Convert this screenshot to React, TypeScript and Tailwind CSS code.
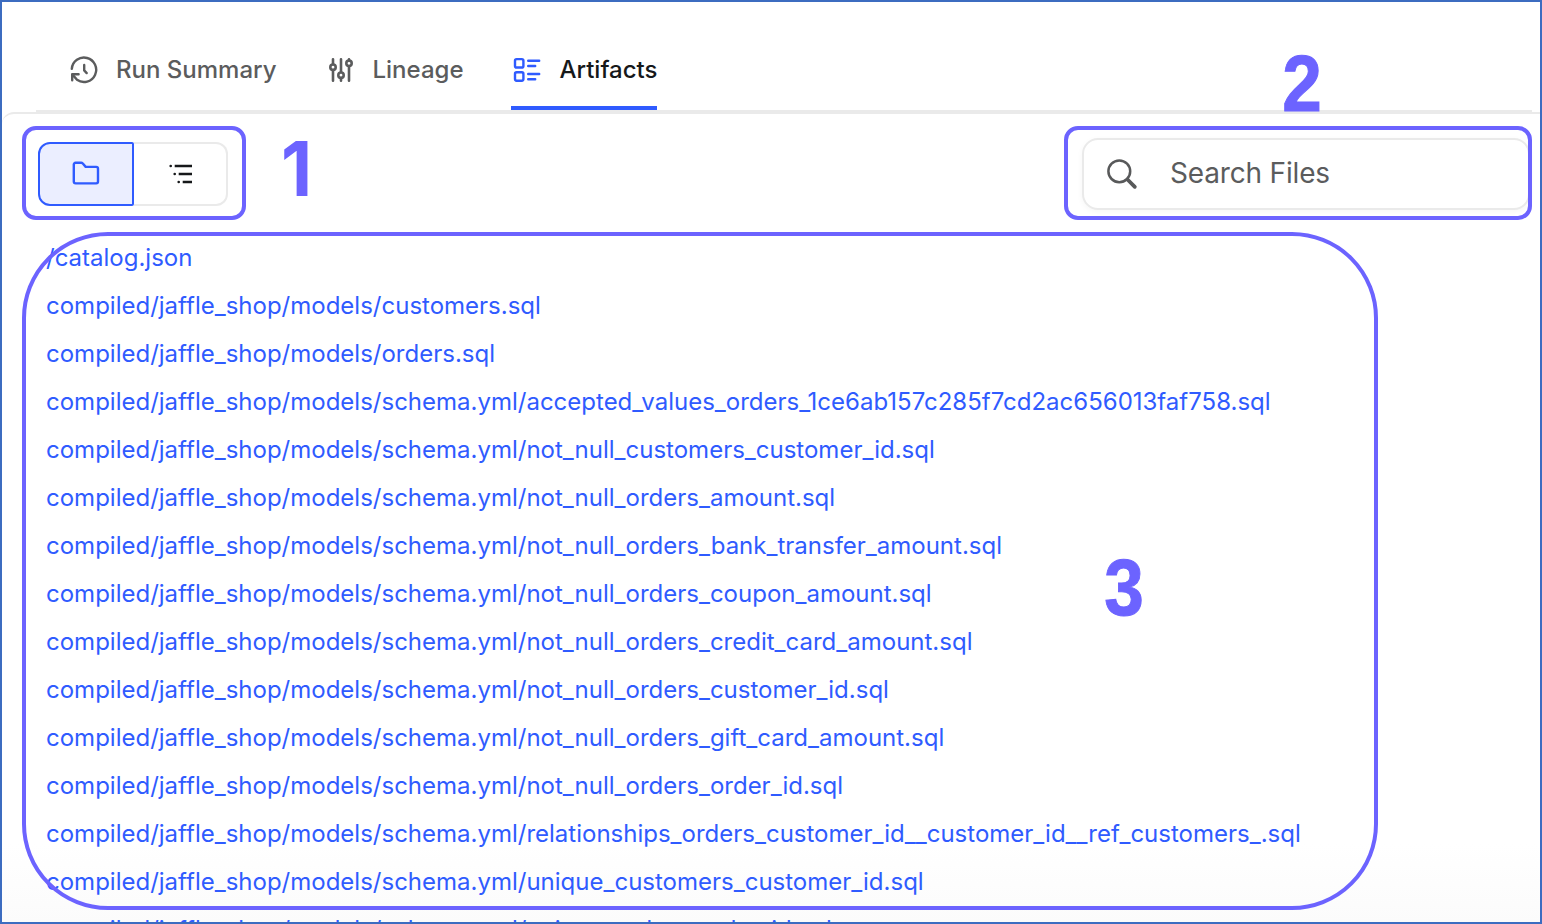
import type { ReactNode } from "react";

const files = [
  "/catalog.json",
  "compiled/jaffle_shop/models/customers.sql",
  "compiled/jaffle_shop/models/orders.sql",
  "compiled/jaffle_shop/models/schema.yml/accepted_values_orders_1ce6ab157c285f7cd2ac656013faf758.sql",
  "compiled/jaffle_shop/models/schema.yml/not_null_customers_customer_id.sql",
  "compiled/jaffle_shop/models/schema.yml/not_null_orders_amount.sql",
  "compiled/jaffle_shop/models/schema.yml/not_null_orders_bank_transfer_amount.sql",
  "compiled/jaffle_shop/models/schema.yml/not_null_orders_coupon_amount.sql",
  "compiled/jaffle_shop/models/schema.yml/not_null_orders_credit_card_amount.sql",
  "compiled/jaffle_shop/models/schema.yml/not_null_orders_customer_id.sql",
  "compiled/jaffle_shop/models/schema.yml/not_null_orders_gift_card_amount.sql",
  "compiled/jaffle_shop/models/schema.yml/not_null_orders_order_id.sql",
  "compiled/jaffle_shop/models/schema.yml/relationships_orders_customer_id__customer_id__ref_customers_.sql",
  "compiled/jaffle_shop/models/schema.yml/unique_customers_customer_id.sql",
  "compiled/jaffle_shop/models/schema.yml/unique_orders_order_id.sql",
];

function HistoryIcon() {
  return (
    <svg className="size-8" viewBox="0 0 32 32" fill="none" stroke="currentColor" strokeWidth="2.4" strokeLinecap="round" strokeLinejoin="round">
      <path d="M3.8 14.8A12.2 12.2 0 1 1 9 25.800L4.500 20.600" />
      <path d="M4.2 26.2V20.2H10.6" />
      <path d="M16.2 11v5.4l2.5 2.7" />
    </svg>
  );
}

function SlidersIcon() {
  return (
    <svg className="size-8" viewBox="0 0 32 32" fill="none" stroke="currentColor" strokeWidth="2.6" strokeLinecap="round">
      <path d="M8 5.3v4.9M8 16.2v10.5M16 5.3v12.6M16 24v2.7M24 5.3v1.2M24 12.2v14.5" />
      <circle cx="8" cy="13.2" r="2.7" />
      <circle cx="16" cy="21.2" r="2.7" />
      <circle cx="24" cy="9.3" r="2.7" />
    </svg>
  );
}

function ArtifactsIcon() {
  return (
    <svg className="size-8" viewBox="0 0 32 32" fill="none" stroke="#2f5bff" strokeWidth="2.4" strokeLinecap="round">
      <rect x="4" y="5.1" width="8.4" height="8.4" rx="1.6" />
      <rect x="4" y="18.3" width="8.4" height="8.4" rx="1.6" />
      <path d="M17.2 6.8h11M17.2 12h7M17.2 20h11M17.2 25.2h7" />
    </svg>
  );
}

function FolderIcon() {
  return (
    <svg className="size-8" viewBox="0 0 32 32" fill="none" stroke="#2f5bff" strokeWidth="2.4" strokeLinejoin="round">
      <path d="M3.800 6.5a1.7 1.7 0 0 1 1.7-1.7h5.600c.7 0 1.200.2 1.700.7l2.900 3.400h10.500a1.800 1.800 0 0 1 1.800 1.800v12.900a1.800 1.800 0 0 1-1.800 1.800H5.600a1.800 1.800 0 0 1-1.800-1.800Z" />
    </svg>
  );
}

function TreeIcon() {
  return (
    <svg className="size-8" viewBox="0 0 32 32" fill="none" stroke="#16181a" strokeWidth="2.6">
      <path d="M10.7 8H28M14.7 16H28M18.7 24H28" />
      <path d="M6.7 8h.01M10.7 16h.01M14.7 24h.01" strokeLinecap="round" />
    </svg>
  );
}

function SearchIcon() {
  return (
    <svg className="size-8" viewBox="0 0 32 32" fill="none" stroke="#58595a" strokeLinecap="round">
      <circle cx="13.3" cy="13.3" r="10.9" strokeWidth="2.5" />
      <path d="M21.5 21.5L28.800 28.800" strokeWidth="3.8" />
    </svg>
  );
}

interface TabProps {
  icon: ReactNode;
  label: string;
  active?: boolean;
}

function Tab({ icon, label, active }: TabProps) {
  return (
    <button
      className={`relative flex h-full items-center gap-4 text-2xl font-medium ${
        active ? "text-[#16181a]" : "text-[#5b5c5d]"
      }`}
    >
      {icon}
      <span className="whitespace-nowrap">{label}</span>
      {active && <span className="absolute inset-x-0 bottom-0 h-1 bg-[#2f5bff]" />}
    </button>
  );
}

export default function App() {
  return (
    <div className="relative h-[924px] w-[1542px] overflow-hidden border-2 border-[#3c6cc0] bg-white font-['Inter',sans-serif]">
      <nav className="ml-[34px] mr-2 mt-7 flex h-[82px] gap-12 border-b-2 border-[#eaeaea] pl-8">
        <Tab icon={<HistoryIcon />} label="Run Summary" />
        <Tab icon={<SlidersIcon />} label="Lineage" />
        <Tab icon={<ArtifactsIcon />} label="Artifacts" active />
      </nav>

      <main className="h-[812px] rounded-tl-xl border-t-2 border-[#eaeaea] bg-linear-to-b from-white from-90% to-[#fbfbfb]">
        <div className="flex items-center justify-between py-6 pl-9 pr-2.5">
          {/* View toggle */}
          <div className="flex h-16 w-[190px]">
            <button className="flex w-24 items-center justify-center rounded-l-xl rounded-r-xs border-2 border-[#2f5bff] bg-[#ebeeff]">
              <FolderIcon />
            </button>
            <button className="flex flex-1 items-center justify-center rounded-r-xl border-2 border-l-0 border-[#eaeaea]">
              <TreeIcon />
            </button>
          </div>

          <div className="flex h-[72px] w-[448px] items-center gap-8 rounded-2xl border-2 border-[#eaeaea] bg-white pl-[22px] shadow-[0_2px_6px_rgba(0,0,0,0.04)]">
            <SearchIcon />
            <span className="pb-0.5 text-[28px] tracking-[-0.17px] text-[#5b5c5d]">Search Files</span>
          </div>
        </div>

        <ul className="pl-11">
          {files.map((file) => (
            <li key={file} className="flex h-12 items-center whitespace-nowrap text-2xl text-[#2f5bff]">
              {file}
            </li>
          ))}
        </ul>
      </main>

      {/* Callouts drawn over the page */}
      <div className="absolute left-5 top-[124px] h-[94px] w-56 rounded-[14px] border-4 border-[#6c63ff]" />
      <div className="absolute left-[1062px] top-[124px] h-[94px] w-[468px] rounded-[14px] border-4 border-[#6c63ff]" />
      <div className="absolute left-5 top-[230px] h-[678px] w-[1356px] rounded-[86px] border-4 border-[#6c63ff]" />
      <span className="absolute left-[279px] top-[126px] origin-left scale-x-95 font-['Inter',sans-serif] text-[76px] font-bold leading-[80px] text-[#6c63ff]">1</span>
      <span className="absolute left-[1278px] top-[42px] scale-x-90 font-['Liberation_Sans',sans-serif] text-[79px] font-bold leading-[80px] text-[#6c63ff] [-webkit-text-stroke:1px_#6c63ff]">2</span>
      <span className="absolute left-[1100px] top-[546px] scale-x-90 font-['Liberation_Sans',sans-serif] text-[79px] font-bold leading-[80px] text-[#6c63ff] [-webkit-text-stroke:1px_#6c63ff]">3</span>
    </div>
  );
}
